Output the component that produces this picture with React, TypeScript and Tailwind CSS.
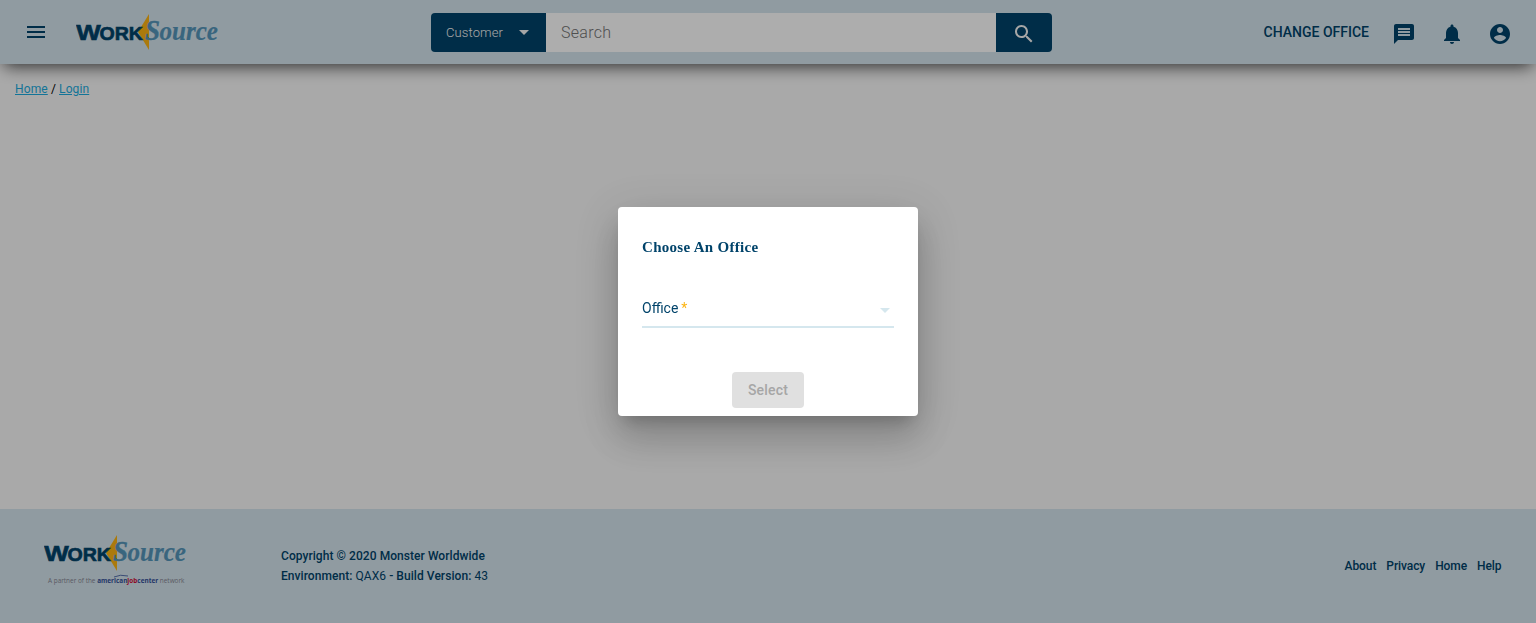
import React from 'react';

function Logo() {
  return (
    <svg width="144" height="38" viewBox="0 0 144 38" className="block shrink-0" aria-label="WorkSource">
      <path d="M73 1 V37 L62 19 Z" fill="#fcb414" />
      <g fill="#00436a" stroke="#00436a" strokeWidth="0.6" fontFamily="'Liberation Sans',sans-serif" fontWeight="700">
        <text x="0.3" y="26.5" fontSize="22" textLength="24.500" lengthAdjust="spacingAndGlyphs">W</text>
        <text x="23.500" y="26.5" fontSize="18" textLength="43.500" lengthAdjust="spacingAndGlyphs">ORK</text>
      </g>
      <g fill="#5596ba" stroke="#5596ba" strokeWidth="0.4" fontFamily="'Liberation Serif',serif" fontStyle="italic" fontWeight="700">
        <text x="69" y="26.5" fontSize="29" textLength="15" lengthAdjust="spacingAndGlyphs">S</text>
        <text x="83.500" y="26.5" fontSize="27" strokeWidth="0.2" textLength="58.500" lengthAdjust="spacingAndGlyphs">ource</text>
      </g>
    </svg>
  );
}

function PartnerLine() {
  return (
    <svg width="144" height="14" viewBox="0 0 144 14" className="block">
      <text x="4" y="9" fontFamily="'Open Sans','Liberation Sans',sans-serif" fontSize="7" fill="#858593" textLength="136.500" lengthAdjust="spacingAndGlyphs">
        A partner of the{' '}
        <tspan fontWeight="700" fill="#34509a">american</tspan>
        <tspan fontWeight="700" fill="#d01038">job</tspan>
        <tspan fontWeight="700" fill="#34509a">center</tspan>
        {' '}network
      </text>
      <path d="M70 3 Q76 0 84 2" fill="none" stroke="#34509a" strokeWidth="0.8" />
    </svg>
  );
}

function Icon({ d, className }: { d: string; className?: string }) {
  return (
    <svg width="24" height="24" viewBox="0 0 24 24" fill="currentColor" className={className}>
      <path d={d} />
    </svg>
  );
}

const icons = {
  menu: 'M3 18h18v-2H3v2zm0-5h18v-2H3v2zm0-7v2h18V6H3z',
  search:
    'M15.5 14h-.79l-.28-.27C15.41 12.59 16 11.11 16 9.500 16 5.910 13.090 3 9.500 3S3 5.910 3 9.500 5.910 16 9.500 16c1.610 0 3.090-.59 4.230-1.570l.27.28v.79l5 4.990L20.490 19l-4.990-5zm-6 0C7.010 14 5 11.990 5 9.500S7.010 5 9.500 5 14 7.010 14 9.500 11.990 14 9.500 14z',
  message: 'M20 2H4c-1.100 0-1.990.9-1.990 2L2 22l4-4h14c1.100 0 2-.9 2-2V4c0-1.100-.9-2-2-2zm-2 12H6v-2h12v2zm0-3H6V9h12v2zm0-3H6V6h12v2z',
  bell: 'M12 22c1.100 0 2-.9 2-2h-4c0 1.100.89 2 2 2zm6-6v-5c0-3.070-1.640-5.640-4.500-6.320V4c0-.83-.67-1.500-1.500-1.500s-1.500.67-1.500 1.500v.68C7.630 5.360 6 7.920 6 11v5l-2 2v1h16v-1l-2-2z',
  account:
    'M12 2C6.480 2 2 6.480 2 12s4.480 10 10 10 10-4.480 10-10S17.520 2 12 2zm0 3c1.660 0 3 1.340 3 3s-1.340 3-3 3-3-1.340-3-3 1.340-3 3-3zm0 14.200c-2.500 0-4.710-1.280-6-3.220.03-1.990 4-3.080 6-3.080 1.990 0 5.970 1.090 6 3.080-1.290 1.940-3.500 3.220-6 3.220z',
};

function Header() {
  return (
    <header className="z-10 grid h-16 shrink-0 grid-cols-[431px_621px_1fr] items-center bg-[#d5e5ed] shadow-[0_6px_16px_-4px_rgba(0,0,0,0.75)]">
      <div className="flex items-center pl-6">
        <button aria-label="Menu"><Icon d={icons.menu} /></button>
        <div className="ml-[28px]"><Logo /></div>
      </div>
      <div className="mt-px flex h-[39px] overflow-hidden rounded">
        <button className="flex w-[115px] items-center bg-[#00436a] pl-[15px] text-[13px] tracking-[0.1px] text-[#f5f5f5]">
          <span className="w-[73px] text-left font-light">Customer</span>
          <svg width="10" height="5" viewBox="0 0 10 5" fill="currentColor"><path d="M0 0h10L5 5z" /></svg>
        </button>
        <input placeholder="Search" className="w-[450px] bg-white pl-[15px] text-base font-light tracking-[0.3px] outline-none placeholder:text-[#757575]" />
        <button aria-label="Search" className="flex w-14 items-center justify-center bg-[#00436a] text-[#f5f5f5]">
          <Icon d={icons.search} className="mt-0.5" />
        </button>
      </div>
      <div className="flex items-center justify-end gap-6 pr-6">
        <span className="-mr-px text-sm font-medium">CHANGE OFFICE</span>
        <Icon d={icons.message} className="mt-1" />
        <Icon d={icons.bell} className="mt-1" />
        <Icon d={icons.account} className="mt-1" />
      </div>
    </header>
  );
}

function Footer() {
  return (
    <footer className="flex h-[114px] shrink-0 items-start bg-[#d5e5ed] text-xs font-medium">
      <div className="w-[281px] pl-[44px] pt-[25px]">
        <Logo />
        <div className="mt-[2px]"><PartnerLine /></div>
      </div>
      <div className="pt-[37px] leading-5 tracking-[0.06px]">
        <p>Copyright © 2020 Monster Worldwide</p>
        <p>Environment: <span className="font-normal">QAX6</span> - Build Version: <span className="font-normal">43</span></p>
      </div>
      <nav className="ml-auto flex gap-[10px] pr-[34.5px] pt-[47px] leading-5 tracking-[-0.08px]">
        <a>About</a><a>Privacy</a><a>Home</a><a>Help</a>
      </nav>
    </footer>
  );
}

function OfficeDialog() {
  return (
    <div className="fixed inset-0 z-20 flex items-center justify-center bg-black/[0.32]">
      <section role="dialog" className="flex h-[209px] w-[300px] flex-col rounded bg-white px-6 pb-2 shadow-[0_11px_15px_-7px_rgba(0,0,0,0.2),0_24px_38px_3px_rgba(0,0,0,0.14),0_9px_46px_8px_rgba(0,0,0,0.12)]">
        <h2 className="mt-[30px] font-['Liberation_Serif',serif] text-[15px] leading-5 font-bold tracking-[0.3px]">Choose An Office</h2>
        <div className="mt-[36px] flex h-[35px] items-start justify-between border-b-2 border-[#d5e7ee] pt-[5px] pr-1 text-sm leading-5">
          <span>Office<span className="ml-[3px] text-[#fcb414]">*</span></span>
          <svg width="10" height="5" viewBox="0 0 10 5" fill="#d5e7ee" className="mt-[10px]"><path d="M0 0h10L5 5z" /></svg>
        </div>
        <button disabled className="mt-auto h-9 w-[72px] self-center rounded bg-[#e0e0e0] text-sm font-medium tracking-[0.2px] text-[#a6a6a6]">Select</button>
      </section>
    </div>
  );
}

export default function App() {
  return (
    <div className="flex h-screen flex-col overflow-hidden bg-[#fafafa] font-[Roboto,sans-serif] text-[#00436a]">
      <Header />
      <main className="flex-1 px-[15px] pt-[15px] text-xs leading-5 tracking-[0.12px] text-black">
        <a className="text-[#1cace0] underline">Home</a> / <a className="text-[#1cace0] underline">Login</a>
      </main>
      <Footer />
      <OfficeDialog />
    </div>
  );
}
